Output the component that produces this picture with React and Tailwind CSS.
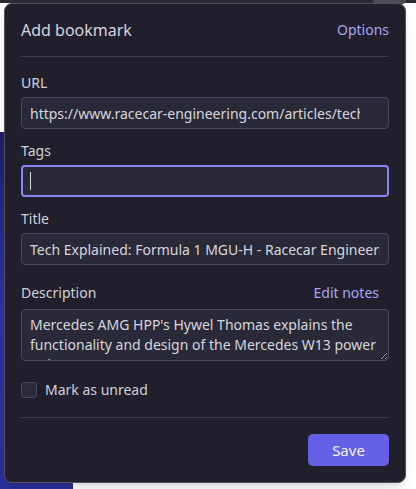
import { useState } from 'react'

function Field({ label, children, right }) {
  return (
    <div className="flex flex-col">
      <div className="flex h-5 items-center justify-between">
        <span className="text-sm text-[#d2d1da]">{label}</span>
        {right}
      </div>
      {children}
    </div>
  )
}

export default function App() {
  const [unread, setUnread] = useState(false)

  return (
    <div
      className="relative h-[489px] w-[416px] overflow-hidden bg-white"
      style={{ fontFamily: '"Noto Sans", "Open Sans", sans-serif' }}
    >
      {/* page behind the popup */}
      <div className="absolute left-0 top-0 h-[3px] w-full bg-[#2b2a33]" />
      <div className="absolute left-[373px] top-0 h-[4px] w-[33px] rounded-b-[4px] bg-[#4d4c55]" />
      <div className="absolute bottom-0 left-0 top-[132px] w-[73px] bg-gradient-to-b from-[#1d1f6a] via-[#3034a6] to-[#2b2f9a]" />

      {/* popup */}
      <div className="absolute left-[4px] top-[3px] flex h-[480px] w-[402px] flex-col rounded-lg border border-[#52505e] bg-[#201f2b] px-[16px] pt-[14px] shadow-lg">
        <div className="flex h-6 items-center justify-between">
          <h1 className="text-base text-[#d6d5dd]">Add bookmark</h1>
          <button className="text-sm text-[#a9a6f3]">Options</button>
        </div>
        <div className="mt-[14px] border-t border-[#3d3b52]" />

        <div className="mt-4">
          <Field label="URL">
            <input
              readOnly
              value="https://www.racecar-engineering.com/articles/tech-explained-formula-1-mgu-h/"
              className="mt-1 h-8 w-full rounded-[4px] border border-[#4a485c] bg-[#2a2937] pl-2 pr-7 text-sm text-[#d6d6de] outline-none"
            />
          </Field>
        </div>

        <div className="mt-3">
          <Field label="Tags">
            <div className="mt-1 flex h-8 w-full items-center rounded-[4px] border-2 border-[#8985f6] bg-[#2a2937] px-[7px]">
              <span className="h-[18px] w-px bg-[#d6d6de]" />
            </div>
          </Field>
        </div>

        <div className="mt-3">
          <Field label="Title">
            <input
              readOnly
              value="Tech Explained: Formula 1 MGU-H - Racecar Engineering"
              className="mt-1 h-8 w-full rounded-[4px] border border-[#4a485c] bg-[#2a2937] px-2 text-sm text-[#d6d6de] outline-none"
            />
          </Field>
        </div>

        <div className="mt-[18px]">
          <Field
            label="Description"
            right={<button className="mr-[10px] text-sm text-[#a9a6f3]">Edit notes</button>}
          >
            <textarea
              readOnly
              value="Mercedes AMG HPP's Hywel Thomas explains the functionality and design of the Mercedes W13 power unit's MGU-H."
              className="mt-[6px] block h-[52px] w-full resize-y overflow-hidden rounded-[4px] border border-[#4a485c] bg-[#2a2937] px-2 pt-[5px] text-sm leading-5 text-[#d6d6de] outline-none"
            />
          </Field>
        </div>

        <label className="mt-[19px] flex items-center gap-2">
          <input
            type="checkbox"
            checked={unread}
            onChange={(e) => setUnread(e.target.checked)}
            className="h-4 w-4 appearance-none rounded-[3px] border border-[#4a485c] bg-[#2c2b3b]"
          />
          <span className="text-sm text-[#d2d1da]">Mark as unread</span>
        </label>

        <div className="mt-[17px] border-t border-[#3d3b52]" />

        <div className="mt-4 flex justify-end">
          <button className="h-8 w-[81px] rounded-[5px] bg-[#6461e7] text-[15px] text-[#f2f2ff]">Save</button>
        </div>
      </div>
    </div>
  )
}
